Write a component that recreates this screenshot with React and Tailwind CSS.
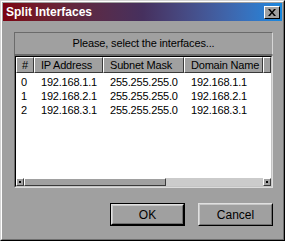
const columns = [
  { key: "idx", label: "#", width: "w-[18px]", header: "justify-center", cell: "pl-[5px]" },
  { key: "ip", label: "IP Address", width: "w-[69px]", header: "pl-[6px]", cell: "pl-[7px]" },
  { key: "mask", label: "Subnet Mask", width: "w-[81px]", header: "pl-[6px]", cell: "pl-[7px]" },
  { key: "domain", label: "Domain Name", width: "w-[79px]", header: "pl-[6px]", cell: "pl-[7px]" },
];

const rows = [
  { idx: "0", ip: "192.168.1.1", mask: "255.255.255.0", domain: "192.168.1.1" },
  { idx: "1", ip: "192.168.2.1", mask: "255.255.255.0", domain: "192.168.2.1" },
  { idx: "2", ip: "192.168.3.1", mask: "255.255.255.0", domain: "192.168.3.1" },
];

function ScrollArrow() {
  return (
    <div className="flex h-full w-[8px] items-center justify-center border border-t-white border-l-white border-r-[#3a3a3a] border-b-[#3a3a3a] bg-[#a0a0a0]">
      <div className="h-[2px] w-[2px] bg-black" />
    </div>
  );
}

function Button({ label, isDefault }) {
  return (
    <div className={`h-[23px] w-[75px] ${isDefault ? "border border-black" : ""}`}>
      <div className="h-full border border-t-[#e0e0e0] border-l-[#e0e0e0] border-r-black border-b-black">
        <div className="flex h-full items-center justify-center border border-t-[#c8c8c8] border-l-[#c8c8c8] border-r-[#707070] border-b-[#707070] text-[12px] text-black">
          {label}
        </div>
      </div>
    </div>
  );
}

export default function App() {
  return (
    <div className="h-[241px] w-[285px] border border-t-[#d4d4d4] border-l-[#d4d4d4] border-r-black border-b-black bg-[#a0a0a0] font-['Liberation_Sans',Arial,sans-serif]">
      <div className="flex h-full flex-col border border-t-white border-l-white border-r-[#6e6e6e] border-b-[#6e6e6e] p-px">
        {/* title bar */}
        <div className="flex h-[18px] items-center bg-linear-to-r from-[#7c0010] via-[#46305e] to-[#1488e0] pl-[3px] pr-[2px]">
          <span className="text-[12px] font-bold text-white">Split Interfaces</span>
          <div className="ml-auto flex h-[13px] w-[16px] items-center justify-center border border-t-white border-l-white border-r-black border-b-black bg-[#a0a0a0]">
            <svg width="8" height="7" viewBox="0 0 8 7">
              <path d="M0 0h2l2 2.5L6 0h2L5 3.5 8 7H6L4 4.5 2 7H0l3-3.5z" fill="black" />
            </svg>
          </div>
        </div>

        <div className="flex flex-1 flex-col pl-[11px] pr-[9px] pt-[11px]">
          {/* prompt box */}
          <div className="flex h-[23px] items-center justify-center border border-t-[#6b6b6b] border-l-[#6b6b6b] border-r-[#d6d6d6] border-b-[#6b6b6b] text-[11px] tracking-[-0.15px] text-black">
            Please, select the interfaces...
          </div>

          {/* list */}
          <div className="h-[133px] border border-t-[#6b6b6b] border-l-[#6b6b6b] border-r-[#dcdcdc] border-b-[#dcdcdc]">
            <div className="flex h-full flex-col border border-t-black border-l-black border-r-[#c4c4c4] border-b-[#c4c4c4] bg-white">
              <div className="flex h-[16px] bg-[#a0a0a0] text-[11px] tracking-[-0.2px] text-black">
                {columns.map((c) => (
                  <div
                    key={c.key}
                    className={`flex ${c.width} ${c.header} items-center whitespace-nowrap border border-t-white border-l-white border-r-[#3a3a3a] border-b-[#3a3a3a]`}
                  >
                    {c.label}
                  </div>
                ))}
                <div className="flex-1 border border-t-white border-l-white border-r-[#3a3a3a] border-b-[#3a3a3a]" />
              </div>

              <div className="flex-1 pt-[2px] text-[11px] tracking-[-0.2px] text-black">
                {rows.map((r) => (
                  <div key={r.idx} className="flex h-[14px] items-center">
                    {columns.map((c) => (
                      <div key={c.key} className={`${c.width} ${c.cell} whitespace-nowrap`}>
                        {r[c.key]}
                      </div>
                    ))}
                  </div>
                ))}
              </div>

              {/* horizontal scrollbar */}
              <div className="flex h-[8px] bg-[#cbcbcb]">
                <ScrollArrow />
                <div className="h-full w-[142px] border border-t-white border-l-white border-r-[#3a3a3a] border-b-[#3a3a3a] bg-[#a0a0a0]" />
                <div className="flex-1" />
                <ScrollArrow />
              </div>
            </div>
          </div>

          {/* buttons */}
          <div className="mt-[15px] flex justify-end gap-[13px]">
            <Button label="OK" isDefault />
            <Button label="Cancel" />
          </div>
        </div>
      </div>
    </div>
  );
}
